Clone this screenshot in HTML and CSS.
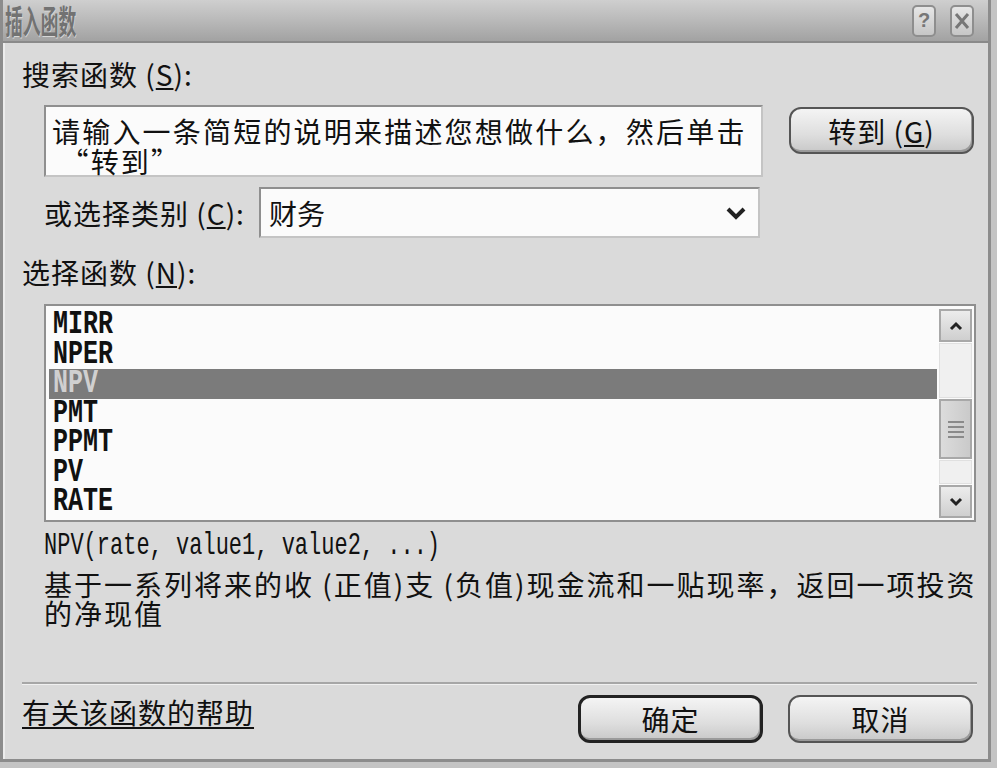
FILE: index.html
```html
<!DOCTYPE html>
<html lang="zh-CN">
<head>
<meta charset="utf-8">
<title>插入函数</title>
<link rel="stylesheet" href="styles.css">
</head>
<body>
<div class="dialog">
  <div class="titlebar">
    <span class="title">插入函数</span>
    <div class="tbtns">
      <span class="tbtn">?</span>
      <span class="tbtn"><svg width="16" height="18" viewBox="0 0 16 18"><path d="M2 2 L14 16 M14 2 L2 16" stroke="#777" stroke-width="3" fill="none"/></svg></span>
    </div>
  </div>
  <div class="client">
    <div class="label first">搜索函数 (<u>S</u>):</div>
    <div class="search-row">
      <div class="search-box">请输入一条简短的说明来描述您想做什么，然后单击<br>&nbsp;“转到”</div>
      <div class="btn go">转到 (<u>G</u>)</div>
    </div>
    <div class="cat-row">
      <span class="label">或选择类别 (<u>C</u>):</span>
      <div class="select"><span>财务</span>
        <svg class="chev" width="20" height="14" viewBox="0 0 20 14"><path d="M2 3 L10 11 L18 3" stroke="#222" stroke-width="4" fill="none"/></svg>
      </div>
    </div>
    <div class="label">选择函数 (<u>N</u>):</div>
    <div class="listbox">
      <div class="items">
        <div class="item"><span>MIRR</span></div>
        <div class="item"><span>NPER</span></div>
        <div class="item sel"><span>NPV</span></div>
        <div class="item"><span>PMT</span></div>
        <div class="item"><span>PPMT</span></div>
        <div class="item"><span>PV</span></div>
        <div class="item"><span>RATE</span></div>
      </div>
      <div class="scrollbar">
        <div class="sb-btn"><svg width="14" height="10" viewBox="0 0 14 10"><path d="M2 8 L7 3 L12 8" stroke="#222" stroke-width="3" fill="none"/></svg></div>
        <div class="sb-track t1"></div>
        <div class="sb-thumb"><span></span><span></span><span></span><span></span></div>
        <div class="sb-track t2"></div>
        <div class="sb-btn"><svg width="14" height="10" viewBox="0 0 14 10"><path d="M2 2 L7 7 L12 2" stroke="#222" stroke-width="3" fill="none"/></svg></div>
      </div>
    </div>
    <div class="formula"><span>NPV(rate, value1, value2, ...)</span></div>
    <div class="desc">基于一系列将来的收 (正值)支 (负值)现金流和一贴现率，返回一项投资<br>的净现值</div>
    <div class="sep"></div>
    <div class="footer">
      <a class="help">有关该函数的帮助</a>
      <div class="btns">
        <div class="btn ok">确定</div>
        <div class="btn">取消</div>
      </div>
    </div>
  </div>
</div>
</body>
</html>
```

FILE: styles.css
```css
* { box-sizing: border-box; }
body {
  margin: 0;
  background: #c4c4c4;
  font-family: "Noto Sans CJK SC", "Noto Sans", sans-serif;
  color: #111;
}
.dialog {
  width: 991px;
  height: 762px;
  border-left: 3px solid #8c8c8c;
  border-right: 3px solid #8c8c8c;
  border-bottom: 3px solid #8c8c8c;
  background: #dadada;
  display: flex;
  flex-direction: column;
}
.titlebar {
  height: 43px;
  background: linear-gradient(#cfcfcf, #b9b9b9 50%, #a2a2a2);
  border-bottom: 2px solid #8a8a8a;
  display: flex;
  align-items: center;
  justify-content: space-between;
  padding: 0 14px 0 2px;
  flex: none;
}
.title {
  display: inline-block;
  font-size: 33px;
  font-weight: 700;
  color: #727272;
  text-shadow: 1px 1px 0 #d8d8d8;
  transform: scaleX(0.54);
  transform-origin: left center;
  line-height: 1;
}
.tbtns { display: flex; gap: 14px; }
.tbtn {
  width: 24px;
  height: 32px;
  border: 2px solid #8e8e8e;
  border-radius: 5px;
  background: linear-gradient(#e6e6e6, #c6c6c6);
  display: flex;
  align-items: center;
  justify-content: center;
  font-family: "Liberation Sans", sans-serif;
  font-weight: 700;
  font-size: 20px;
  color: #777;
}
.client {
  flex: 1;
  padding: 0 14px 0 17px;
  display: flex;
  flex-direction: column;
  border-left: 2px solid #ececec;
}
.label {
  font-size: 28px;
  line-height: 30px;
  height: 30px;
  letter-spacing: 1px;
}
.label.first { margin-top: 16px; }
u { text-decoration-thickness: 2px; text-underline-offset: 2px; }
.search-row {
  display: flex;
  margin-top: 16px;
  margin-left: 22px;
  gap: 26px;
  align-items: flex-start;
}
.search-box {
  width: 719px;
  height: 72px;
  background: #fbfbfb;
  border: 2px solid #8f8f8f;
  border-right-color: #c4c4c4;
  border-bottom-color: #c4c4c4;
  padding: 9px 0 0 6px;
  font-size: 28px;
  line-height: 30px;
  letter-spacing: 2.2px;
  white-space: nowrap;
}
.btn {
  width: 185px;
  height: 47px;
  border: 2px solid #555;
  border-radius: 12px;
  background: linear-gradient(#f4f4f4, #dedede 60%, #c8c8c8);
  box-shadow: inset -1px -2px 0 #9a9a9a;
  display: flex;
  align-items: center;
  justify-content: center;
  font-size: 28px;
  letter-spacing: 1px;
}
.btn.go { margin-top: 2px; }
.cat-row {
  display: flex;
  align-items: center;
  margin-top: 10px;
  margin-left: 22px;
  gap: 14px;
}
.select {
  width: 501px;
  height: 51px;
  background: #fbfbfb;
  border: 2px solid #8f8f8f;
  border-right-color: #c4c4c4;
  border-bottom-color: #c4c4c4;
  display: flex;
  align-items: center;
  justify-content: space-between;
  padding: 0 12px 0 8px;
  font-size: 28px;
}
.cat-row + .label { margin-top: 19px; }
.listbox {
  margin-top: 17px;
  margin-left: 22px;
  width: 932px;
  height: 218px;
  border: 2px solid #8f8f8f;
  background: #fbfbfb;
  display: flex;
  padding: 3px 2px 2px 3px;
}
.items { flex: 1; padding-top: 1px; }
.item {
  height: 29.5px;
  line-height: 29.5px;
  padding-left: 4px;
  font-family: "Liberation Mono", monospace;
  font-weight: 700;
  font-size: 25px;
  color: #111;
}
.item span, .formula span {
  display: inline-block;
  transform: scaleY(1.35);
}
.item.sel { background: #7b7b7b; color: #d0d0d0; }
.scrollbar {
  width: 33px;
  margin-left: 2px;
  display: flex;
  flex-direction: column;
  gap: 1px;
}
.sb-btn {
  height: 33px;
  border: 2px solid #a8a8a8;
  background: linear-gradient(#ececec, #cfcfcf);
  display: flex;
  align-items: center;
  justify-content: center;
}
.sb-track { background: #f0f0f0; border: 1px solid #e0e0e0; }
.sb-track.t1 { height: 55px; }
.sb-track.t2 { height: 24px; }
.sb-thumb {
  height: 60px;
  border: 2px solid #a8a8a8;
  background: linear-gradient(90deg, #dcdcdc, #cacaca);
  display: flex;
  flex-direction: column;
  align-items: center;
  justify-content: center;
  gap: 3px;
}
.sb-thumb span { width: 16px; height: 2px; background: #8a8a8a; }
.formula {
  margin-top: 10px;
  margin-left: 22px;
  font-family: "Liberation Mono", monospace;
  font-size: 22px;
  line-height: 30px;
}
.formula span { transform: scaleY(1.45); }
.desc {
  margin-top: 8px;
  margin-left: 22px;
  font-size: 28px;
  line-height: 29px;
  letter-spacing: 2px;
  white-space: nowrap;
}
.sep {
  margin-top: 54px;
  margin-left: 0;
  width: 955px;
  height: 3px;
  border-top: 2px solid #a6a6a6;
  border-bottom: 1px solid #f0f0f0;
}
.footer {
  display: flex;
  justify-content: space-between;
  align-items: flex-start;
  margin-top: 10px;
  padding-right: 1px;
}
.help {
  font-size: 28px;
  line-height: 30px;
  margin-top: 2px;
  text-decoration: underline;
  text-decoration-thickness: 2px;
  text-underline-offset: 3px;
  color: #111;
  letter-spacing: 1px;
}
.btns { display: flex; gap: 25px; }
.btns .btn { height: 48px; }
.btn.ok { border-color: #222; border-width: 3px; }
```
